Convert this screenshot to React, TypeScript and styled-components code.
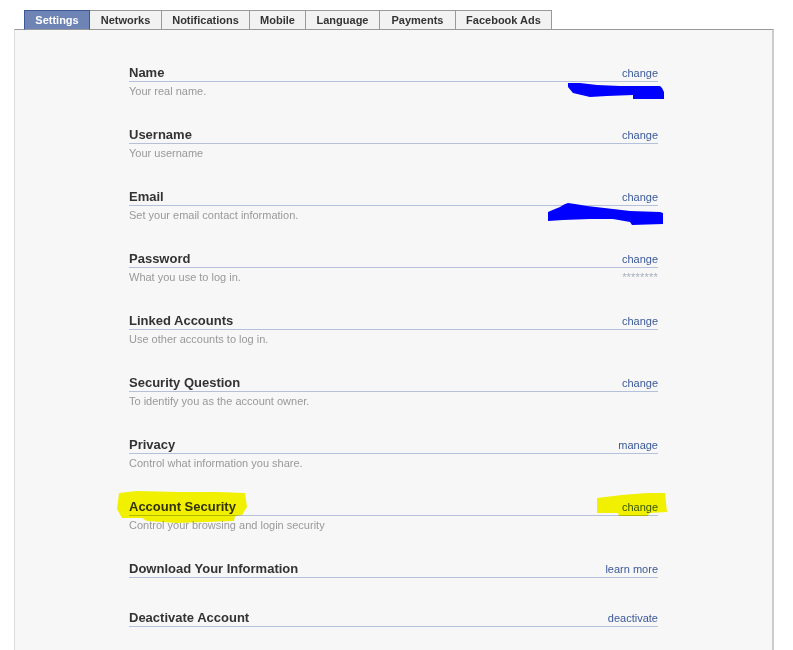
import React from 'react';
import styled, { createGlobalStyle } from 'styled-components';

const GlobalStyle = createGlobalStyle`
	html, body {
		margin: 0;
		padding: 0;
		background: #fff;
		font-family: "Liberation Sans", Arial, sans-serif;
	}
`;

const Page = styled.div`
	padding: 10px 0 0 14px;
	width: 760px;
`;

const TabBar = styled.div`
	display: flex;
	margin-left: 10px;
	position: relative;
	z-index: 1;
	margin-bottom: -1px;
`;

const Tab = styled.div<{ $active?: boolean; $w: number }>`
	width: ${(p) => p.$w}px;
	height: 18px;
	line-height: 18px;
	box-sizing: content-box;
	text-align: center;
	font-size: 11px;
	font-weight: bold;
	color: ${(p) => (p.$active ? '#fff' : '#333')};
	background: ${(p) => (p.$active ? '#6d84b4' : '#f2f2f2')};
	border: 1px solid ${(p) => (p.$active ? '#3b5998' : '#999')};
	border-left-width: ${(p) => (p.$active ? 1 : 0)}px;
	border-bottom-color: #999;
	cursor: pointer;
`;

const Panel = styled.div`
	background: #f7f7f7;
	border: 1px solid #aaa;
	border-top-color: #999;
	border-left-color: #ddd;
	border-right: 2px solid #ccc;
	padding: 35px 114px 40px;
	min-height: 640px;
`;

const Row = styled.div<{ $hasDesc: boolean }>`
	position: relative;
	margin-bottom: ${(p) => (p.$hasDesc ? 29 : 32)}px;
`;

const Header = styled.div`
	display: flex;
	justify-content: space-between;
	align-items: flex-end;
	line-height: 16px;
	border-bottom: 1px solid #b5c0da;
`;

const Title = styled.span`
	font-size: 13px;
	font-weight: bold;
	color: #333;
	position: relative;
	z-index: 1;
`;

const Action = styled.a`
	font-size: 11px;
	color: #3b5998;
	text-decoration: none;
	cursor: pointer;
	position: relative;
	z-index: 1;
`;

const Desc = styled.div`
	display: flex;
	justify-content: space-between;
	padding-top: 2px;
	line-height: 14px;
	font-size: 11px;
	color: #999;
`;

const Masked = styled.span`
	color: #a7afbf;
	letter-spacing: 0.2px;
`;

const Mark = styled.svg<{ $x: number; $y: number; $blend?: boolean }>`
	position: absolute;
	left: ${(p) => p.$x}px;
	top: ${(p) => p.$y}px;
	z-index: ${(p) => (p.$blend ? 2 : 3)};
	mix-blend-mode: ${(p) => (p.$blend ? 'multiply' : 'normal')};
	pointer-events: none;
`;

const tabs = [
	{ label: 'Settings', w: 64, active: true },
	{ label: 'Networks', w: 71 },
	{ label: 'Notifications', w: 87 },
	{ label: 'Mobile', w: 55 },
	{ label: 'Language', w: 73 },
	{ label: 'Payments', w: 75 },
	{ label: 'Facebook Ads', w: 95 },
];

type Item = {
	title: string;
	desc?: string;
	action: string;
	value?: string;
	marks?: React.ReactNode;
};

// redaction scribbles, drawn over the values
const NameScribble = () => (
	<Mark $x={439} $y={18} width="98" height="18" viewBox="0 0 98 18">
		<path
			d="M0 0 L12 0 L29 2 L52 3 L82 3 L92 3 L94 5 L96 9 L96 16 L65 16 L65 12 L39 13 L22 14 L5 10 L0 4 Z"
			fill="#0000ff"
		/>
	</Mark>
);

const EmailScribble = () => (
	<Mark $x={419} $y={14} width="117" height="24" viewBox="0 0 117 24">
		<path
			d="M0 9 L7 6 L12 4 Q16 1 20 0 L27 1 L39 3 L65 6 L82 8 L112 9 L115 10 L115 21 L84 22 L82 19 L65 16 L42 16 L15 17 L0 18 Z"
			fill="#0000ff"
		/>
	</Mark>
);

const TitleHighlight = () => (
	<Mark $x={-12} $y={-10} width="132" height="36" viewBox="0 0 132 36" $blend>
		<path
			d="M2 4 L20 2 L60 3 L100 3 L128 4 L130 18 L125 26 L118 27 L117 32 L60 34 L30 32 L25 29 L5 29 L0 20 Z"
			fill="#f8f800"
		/>
	</Mark>
);

const ActionHighlight = () => (
	<Mark $x={468} $y={-7} width="72" height="26" viewBox="0 0 72 26" $blend>
		<path
			d="M0 6 L25 3 L50 1 L68 1 L70 20 L52 21 L51 24 L22 24 L21 21 L0 21 Z"
			fill="#f8f800"
		/>
	</Mark>
);

const items: Item[] = [
	{ title: 'Name', desc: 'Your real name.', action: 'change', marks: <NameScribble /> },
	{ title: 'Username', desc: 'Your username', action: 'change' },
	{
		title: 'Email',
		desc: 'Set your email contact information.',
		action: 'change',
		marks: <EmailScribble />,
	},
	{ title: 'Password', desc: 'What you use to log in.', action: 'change', value: '********' },
	{ title: 'Linked Accounts', desc: 'Use other accounts to log in.', action: 'change' },
	{ title: 'Security Question', desc: 'To identify you as the account owner.', action: 'change' },
	{ title: 'Privacy', desc: 'Control what information you share.', action: 'manage' },
	{
		title: 'Account Security',
		desc: 'Control your browsing and login security',
		action: 'change',
		marks: (
			<>
				<TitleHighlight />
				<ActionHighlight />
			</>
		),
	},
	{ title: 'Download Your Information', action: 'learn more' },
	{ title: 'Deactivate Account', action: 'deactivate' },
];

const App = () => {
	return (
		<>
			<GlobalStyle />
			<Page>
				<TabBar>
					{tabs.map((t) => (
						<Tab key={t.label} $w={t.w} $active={t.active}>
							{t.label}
						</Tab>
					))}
				</TabBar>
				<Panel>
					{items.map((item) => (
						<Row key={item.title} $hasDesc={!!item.desc}>
							<Header>
								<Title>{item.title}</Title>
								<Action>{item.action}</Action>
							</Header>
							{item.desc && (
								<Desc>
									<span>{item.desc}</span>
									{item.value && <Masked>{item.value}</Masked>}
								</Desc>
							)}
							{item.marks}
						</Row>
					))}
				</Panel>
			</Page>
		</>
	);
};

export default App;
